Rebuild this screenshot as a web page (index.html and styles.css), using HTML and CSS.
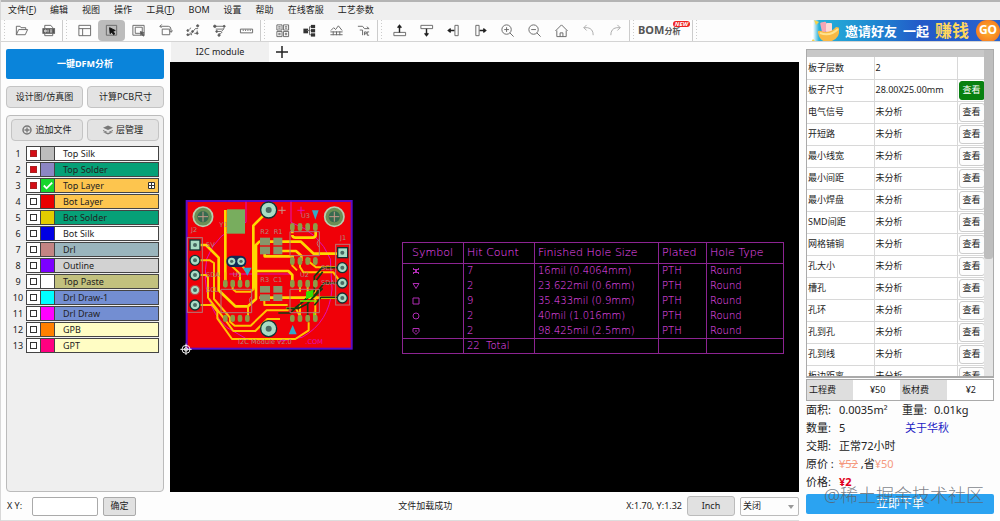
FILE: index.html
```html
<!DOCTYPE html>
<html lang="zh-CN">
<head>
<meta charset="utf-8">
<title>DFM 分析</title>
<link rel="stylesheet" href="styles.css">
</head>
<body>
<div class="app">
  <nav class="menubar">
    <button>文件(<u>F</u>)</button><button>编辑</button><button>视图</button><button>操作</button><button>工具(<u>T</u>)</button><button>BOM</button><button>设置</button><button>帮助</button><button>在线客服</button><button>工艺参数</button>
  </nav>

  <header class="toolbar">
    <div class="tools">
      <button class="tool" aria-label="打开"><svg viewBox="0 0 16 16"><path d="M2.5 12.500V3.500h4l1 1.500h5v2M2.500 12.500l2.500-5.500h9.500l-2.500 5.500z"/></svg></button>
      <button class="tool" aria-label="导入"><svg viewBox="0 0 16 16"><path d="M4 6V2.500h6.500L12.500 5v1M4 11v2.500h8.500V11"/><rect class="solid" x="2" y="6" width="12.500" height="5"/><path class="light" d="M4 7.500v2h1.500v-2zM7.500 7v3M9.500 7.500h2.500M9.500 9.500h2.500"/></svg></button>
    </div>
    <div class="tools">
      <button class="tool" aria-label="布局"><svg viewBox="0 0 16 16"><path d="M2 2.500h12.500v11H2zM2 6h12.500M6 6v7.500"/></svg></button>
      <button class="tool active" aria-label="选择"><svg viewBox="0 0 16 16"><path d="M2.500 2.500h11v10.500h-11z"/><path class="black" d="M6 5l6 3-2.500 .8 2 2.700-1.200 1-2-2.700-1.800 1.500z"/></svg></button>
      <button class="tool" aria-label="框选"><svg viewBox="0 0 16 16"><path d="M2 2.500h12v10.500H2zM4.500 4.500h7.500v6.500H4.500z"/><path class="solid" d="M10 9l4 1.500-1.500 .8 1.500 2-1 .7-1.500-2-1 1z"/></svg></button>
      <button class="tool" aria-label="旋转"><svg viewBox="0 0 16 16"><path d="M4.500 6.500h8v6h-8zM2 3.500h9q3 0 3 4v2M4 1.500L2 3.500l2 2M12 8l2 2 1.500-2"/></svg></button>
      <button class="tool" aria-label="网络"><svg viewBox="0 0 16 16"><path d="M2 12.500h3.500V10M7 13v-2l4-5h3M10 11h3V8M5 7l1-2"/><g class="solid"><circle cx="3" cy="12.500" r="1"/><circle cx="13.500" cy="3" r="1.200"/><circle cx="8" cy="9" r="1"/><circle cx="13" cy="11" r="1"/><circle cx="3" cy="8" r="1"/></g></svg></button>
      <button class="tool" aria-label="走线"><svg viewBox="0 0 16 16"><path d="M2 3.500h12M4 6.500h7l2-1.500M5 9h5l3-3M7 11.500h2l2-2M7 14v-1"/><g class="solid"><circle cx="3" cy="3.500" r="1.300"/><circle cx="5" cy="9" r="1"/><circle cx="7.500" cy="13" r="1.200"/><circle cx="13" cy="3.500" r="1"/></g></svg></button>
      <button class="tool" aria-label="测量"><svg viewBox="0 0 16 16"><path d="M1.500 6.500h13v4h-13zM4.500 7v1.500M7 7v1.500M9.500 7v1.500M12 7v1.500"/></svg></button>
    </div>
    <div class="tools">
      <button class="tool" aria-label="拼板"><svg viewBox="0 0 16 16"><path d="M2 2h5.500v5.500H2zM9 2h5.500v5.500H9zM2 9h5.500v5.500H2zM9 9h5.500v5.500H9zM3.500 4h2.500M3.500 5.500h2.500M10.500 4h2.500M10.500 5.500h2.500M3.500 11h2.500M3.500 12.500h2.500M10.500 11h2.500M10.500 12.500h2.500"/></svg></button>
      <button class="tool" aria-label="结构"><svg viewBox="0 0 16 16"><g class="fill"><rect x="1.500" y="6" width="5" height="5"/><rect x="9.500" y="2" width="4.500" height="3.500"/><rect x="9.500" y="6.500" width="4.500" height="3.500"/><rect x="9.500" y="11" width="4.500" height="3.500"/></g><path d="M5 8h4M8 4v8.500h1.500M8 4h1.500"/></svg></button>
      <button class="tool" aria-label="阻抗"><svg viewBox="0 0 16 16"><path d="M2 8l3-3 2 2 3-4 4 5"/><path d="M1.500 9.500h13M1.500 12.500h13M4.500 9v4M8 9v4M11.500 9v4"/></svg></button>
      <button class="tool" aria-label="IPC"><svg viewBox="0 0 16 16"><path d="M2 3.500h5l2 2.500h5M11.500 4l2.500 2M4 7.500h3v5.500M9 13V9.500h2v2H9M14 9.500h-2V13h2"/></svg></button>
    </div>
    <div class="tools">
      <button class="tool" aria-label="上移"><svg viewBox="0 0 16 16"><path d="M2 10h12.500v3.500H2z"/><path class="arrow" d="M8 10V3M6 5l2-2.500L10 5"/></svg></button>
      <button class="tool" aria-label="下移"><svg viewBox="0 0 16 16"><path d="M2 2.500h12.500V6H2z"/><path class="arrow" d="M8 6v7M6 11l2 2.500 2-2.500"/></svg></button>
      <button class="tool" aria-label="左移"><svg viewBox="0 0 16 16"><path d="M9.500 2.500h3.500v11H9.500z"/><path class="arrow" d="M9 8H3M5 6L2.500 8 5 10"/></svg></button>
      <button class="tool" aria-label="右移"><svg viewBox="0 0 16 16"><path d="M3 2.500h3.500v11H3z"/><path class="arrow" d="M7 8h6M11 6l2.500 2L11 10"/></svg></button>
      <button class="tool" aria-label="放大"><svg viewBox="0 0 16 16"><circle cx="7" cy="7" r="5"/><path d="M10.500 10.500L14.500 14.500M4.500 7h5M7 4.500v5"/></svg></button>
      <button class="tool" aria-label="缩小"><svg viewBox="0 0 16 16"><circle cx="7" cy="7" r="5"/><path d="M10.500 10.500L14.500 14.500M4.500 7h5"/></svg></button>
      <button class="tool" aria-label="主页"><svg viewBox="0 0 16 16"><path d="M1.500 8.500L8 2l6.500 6.500M3 8v6.500h10V8M6.500 14.500v-4h3v4"/></svg></button>
      <button class="tool faded" aria-label="撤销"><svg viewBox="0 0 16 16"><path d="M6 2L3 5l3 3M3 5h4q6 1 6 8"/></svg></button>
      <button class="tool faded" aria-label="重做"><svg viewBox="0 0 16 16"><path d="M10 2l3 3-3 3M13 5H9q-6 1-6 8"/></svg></button>
    </div>
    <div class="tools bom-tools"><button class="bom">BOM<small>分析</small><span class="new">NEW</span></button></div>
    <div class="tools tail"></div>
    <a class="banner" href="#">
      <svg class="cup" viewBox="0 0 28 22"><path d="M3 0l5 2-3 3zM0 22l2-3 3 3z" fill="#f6d34b"/><rect x="10" y="2" width="6" height="10" rx="1" fill="#f7a6b5" transform="rotate(-12 13 7)"/><rect x="15" y="3" width="6" height="9" rx="1" fill="#ffd9d5"/><path d="M7 13q-1-3 3-2 9 3 15-4 4 0 4 3l-2 6q-3 5-10 6-8 0-10-9z" fill="#f9b944"/><path d="M9 13q10 4 18-4" fill="none" stroke="#ffe38d" stroke-width="2"/></svg>
      <b>邀请好友</b><b>一起</b><b class="earn">赚钱</b><span class="go">GO</span>
    </a>
  </header>

  <aside class="side">
    <button class="primary">一键DFM分析</button>
    <div class="pair"><button class="btn">设计图/仿真图</button><button class="btn">计算PCB尺寸</button></div>
    <section class="layers">
      <div class="pair">
        <button class="btn"><svg viewBox="0 0 10 10"><circle cx="5" cy="5" r="4" fill="none" stroke="#777" stroke-width="1.500"/><path d="M5 2.500v5M2.500 5h5" stroke="#777" stroke-width="1.300"/></svg>追加文件</button>
        <button class="btn"><svg viewBox="0 0 10 10"><path d="M5 .5l5 2.300-5 2.300L0 2.800zM0 5l5 2.300L10 5v1L5 8.300 0 6zM0 7.300l5 2.200 5-2.200" fill="#777"/></svg>层管理</button>
      </div>
      <ol>
        <li><span class="num">1</span><label class="layer silk"><input type="checkbox" checked><i class="c1"></i><span>Top Silk</span></label></li>
        <li><span class="num">2</span><label class="layer solder"><input type="checkbox" checked><i class="c2"></i><span>Top Solder</span></label></li>
        <li><span class="num">3</span><label class="layer copper"><input type="checkbox" checked><i class="c3"><svg viewBox="0 0 14 14"><path d="M3 7l3 3 6-6" fill="none" stroke="#fff" stroke-width="2"/></svg></i><span>Top Layer</span><svg class="grid-icon" viewBox="0 0 7 7"><path d="M.5.5h6v6h-6zM3.500.5v6M.5 3.500h6" fill="#fff" stroke="#333"/></svg></label></li>
        <li><span class="num">4</span><label class="layer copper"><input type="checkbox"><i class="c4"></i><span>Bot Layer</span></label></li>
        <li><span class="num">5</span><label class="layer solder"><input type="checkbox"><i class="c5"></i><span>Bot Solder</span></label></li>
        <li><span class="num">6</span><label class="layer silk"><input type="checkbox"><i class="c6"></i><span>Bot Silk</span></label></li>
        <li><span class="num">7</span><label class="layer drl"><input type="checkbox"><i class="c7"></i><span>Drl</span></label></li>
        <li><span class="num">8</span><label class="layer outline"><input type="checkbox"><i class="c8"></i><span>Outline</span></label></li>
        <li><span class="num">9</span><label class="layer paste"><input type="checkbox"><i class="c9"></i><span>Top Paste</span></label></li>
        <li><span class="num">10</span><label class="layer draw"><input type="checkbox"><i class="c10"></i><span>Drl Draw-1</span></label></li>
        <li><span class="num">11</span><label class="layer draw"><input type="checkbox"><i class="c11"></i><span>Drl Draw</span></label></li>
        <li><span class="num">12</span><label class="layer gp"><input type="checkbox"><i class="c12"></i><span>GPB</span></label></li>
        <li><span class="num">13</span><label class="layer gp"><input type="checkbox"><i class="c13"></i><span>GPT</span></label></li>
      </ol>
    </section>
  </aside>

  <main class="work">
    <div class="tabs"><button class="tab">I2C module</button><button class="add" aria-label="新建"><svg viewBox="0 0 12 12"><path d="M6 0v12M0 6h12" stroke="#222" stroke-width="1.500"/></svg></button></div>
    <div class="canvas">
      <svg class="board" viewBox="0 0 552 492">
        <rect x="32" y="18" width="495" height="443" fill="#f00008" stroke="#5a0cc8" stroke-width="6"/>
        <g fill="none" stroke="#e010b8" stroke-width="3">
          <path d="M210 20v62q-90 30-118 110M345 20v62q85 30 118 110l5 90q-8 100-90 145l-70 12M92 192q-20 130 60 205l60 35M160 237h185M375 35v22M364 46h22"/>
        </g>
        <g fill="none" stroke="#ffd800" stroke-width="8" stroke-linejoin="round">
          <path d="M148 45v210M278 46l-46 46v190M72 150h18l38 38v98l50 48h38l24-22V150l10-10h125l38 36h74M242 228h95l12 12v20M349 115v-15M349 120q0 8 10 8h50q10 0 10-8v-12M266 170v14h84v14M300 168h60l16 14v16M250 308h180M380 308h105"/>
        </g>
        <g fill="none" stroke="#ffc400" stroke-width="6" stroke-linejoin="round">
          <path d="M72 196h30l12 8v108l48 56v12l14 12h48l48-46h66M72 240h18l6 8v60l60 78 16 22h66l36-36h38M72 330h36l16 20v20l44 62h190l40-26v-24M170 260v22l10 8h44l12-10M148 262v-30M168 200v14l24 22v20M192 205l20 24M216 330v40M372 290v-30M395 290v-30M418 375v-90M372 200v16l10 16h90l16 22M349 200v12l14 14M480 216l-60 1-20-16v-12M372 375v-50M330 340h30l12 25M265 312v18h70"/>
        </g>
        <g fill="none" stroke="#123c10" stroke-width="5"><path d="M485 218h-46l-24 26v44l-72 66h-36M485 264h-40l-50 62-28 14h-36M440 230l-22 30M400 305l-50 40M440 280l-45 44v36M485 307h-50l-20 24"/></g>
        <path d="M390 290l22-6v20l-22 8z" fill="#32e000"/>
        <path d="M414 350v25M372 318h50" stroke="#76ef00" stroke-width="5"/>
        <g fill="none" stroke="#b57878" stroke-width="3"><rect x="34" y="128" width="45" height="224"/><rect x="479" y="148" width="42" height="182"/><path d="M135 283h92v70h-92v-70M227 304q-13 12 0 24M342 110h88v72h-88zM430 133q-13 12 0 24M342 283h88v70h-88z"/></g>
        <g fill="#78ad5e"><rect x="153" y="43" width="54" height="73"/>
          <g fill="#8c9c48"><rect x="141" y="254" width="14" height="24" rx="7"/><rect x="163" y="254" width="14" height="24" rx="7"/><rect x="185" y="254" width="14" height="24" rx="7"/><rect x="207" y="254" width="14" height="24" rx="7"/><rect x="141" y="359" width="14" height="22" rx="7"/><rect x="163" y="359" width="14" height="22" rx="7"/><rect x="185" y="359" width="14" height="22" rx="7"/><rect x="207" y="359" width="14" height="22" rx="7"/><rect x="342" y="84" width="14" height="24" rx="7"/><rect x="365" y="84" width="14" height="24" rx="7"/><rect x="388" y="84" width="14" height="24" rx="7"/><rect x="411" y="84" width="14" height="24" rx="7"/><rect x="342" y="186" width="14" height="24" rx="7"/><rect x="365" y="186" width="14" height="24" rx="7"/><rect x="388" y="186" width="14" height="24" rx="7"/><rect x="411" y="186" width="14" height="24" rx="7"/><rect x="342" y="254" width="14" height="24" rx="7"/><rect x="365" y="254" width="14" height="24" rx="7"/><rect x="388" y="254" width="14" height="24" rx="7"/><rect x="411" y="254" width="14" height="24" rx="7"/><rect x="342" y="359" width="14" height="22" rx="7"/><rect x="365" y="359" width="14" height="22" rx="7"/><rect x="388" y="359" width="14" height="22" rx="7"/><rect x="411" y="359" width="14" height="22" rx="7"/></g>
          <g fill="#87966b"><rect x="252" y="128" width="30" height="23"/><rect x="292" y="128" width="27" height="23"/><rect x="252" y="155" width="30" height="23"/><rect x="292" y="155" width="27" height="23"/><rect x="252" y="273" width="30" height="20"/><rect x="292" y="273" width="27" height="20"/><rect x="252" y="298" width="30" height="20"/><rect x="292" y="298" width="27" height="20"/></g>
        </g>
        <g fill="#34a9c8"><path d="M408 46h20l-10 28zM201 218h26l-13 24zM338 418l12-28 12 28z"/></g>
        <g fill="#a9dcc4" stroke="#133" stroke-width="4"><circle cx="278" cy="45" r="24"/><circle cx="278" cy="401" r="24"/><rect x="42" y="135" width="30" height="30"/><circle cx="57" cy="196" r="15"/><circle cx="57" cy="240" r="15"/><circle cx="57" cy="285" r="14" stroke="#b44"/><circle cx="57" cy="330" r="15"/><rect x="485" y="158" width="30" height="30"/><circle cx="499" cy="218" r="15"/><circle cx="499" cy="264" r="15"/><circle cx="499" cy="309" r="15"/></g>
        <rect x="151" y="182" width="60" height="34" rx="16" fill="#102a55"/>
        <g fill="#a9dcc4"><circle cx="167" cy="199" r="11"/><circle cx="195" cy="199" r="11"/></g>
        <g fill="#6c8e55" stroke="#b7cfb0" stroke-width="5"><circle cx="81" cy="65" r="29"/><circle cx="475" cy="65" r="29"/></g>
        <g fill="#376a4f"><circle cx="81" cy="65" r="17"/><circle cx="475" cy="65" r="17"/></g>
        <g fill="#496b64"><circle cx="278" cy="45" r="9"/><circle cx="278" cy="401" r="9"/><circle cx="57" cy="150" r="6"/><circle cx="57" cy="196" r="6"/><circle cx="57" cy="240" r="6"/><circle cx="57" cy="285" r="6"/><circle cx="57" cy="330" r="6"/><circle cx="167" cy="199" r="5"/><circle cx="195" cy="199" r="5"/><circle cx="499" cy="173" r="6"/><circle cx="499" cy="218" r="6"/><circle cx="499" cy="264" r="6"/><circle cx="499" cy="309" r="6"/></g>
        <path d="M66 65h30M81 50v30M460 65h30M475 50v30M318 35v22M307 46h22" stroke="#c79a8a" stroke-width="3"/>
        <g class="silk-text"><text x="45" y="112">J2</text><text x="492" y="136">J1</text><text x="130" y="96">Y1</text><text x="253" y="118">R2</text><text x="293" y="118">R1</text><text x="375" y="70">U3</text><text x="170" y="246">U1</text><text x="372" y="246">U2</text><text x="253" y="262">R3</text><text x="292" y="262">C1</text><text x="90" y="157">5V</text><text x="90" y="247">SDA</text><text x="90" y="292">SCL</text><text x="435" y="224">SCL</text><text x="435" y="270">SDA</text><text x="186" y="446">I2C Module v2.0</text></g>
        <text class="pink-text" x="388" y="446">.COM</text>
        <g fill="none" stroke="#eee" stroke-width="3"><circle cx="30" cy="463" r="12"/><circle cx="30" cy="463" r="5"/><path d="M13 463h34M30 446v34"/></g>
      </svg>

      <table class="drill">
        <thead><tr><th class="sym">Symbol</th><th class="hit">Hit Count</th><th class="size">Finished Hole Size</th><th class="plated">Plated</th><th class="type">Hole Type</th></tr></thead>
        <tbody>
          <tr><td><svg viewBox="0 0 8 8"><path d="M1 1l6 6M7 1L1 7M1 2.500h6M1 5.500h6" /></svg></td><td>7</td><td>16mil (0.4064mm)</td><td>PTH</td><td>Round</td></tr>
          <tr><td><svg viewBox="0 0 8 8"><path d="M1 1.500h6L4 6.500z"/></svg></td><td>2</td><td>23.622mil (0.6mm)</td><td>PTH</td><td>Round</td></tr>
          <tr><td><svg viewBox="0 0 8 8"><path d="M1 1h6v6H1z"/></svg></td><td>9</td><td>35.433mil (0.9mm)</td><td>PTH</td><td>Round</td></tr>
          <tr><td><svg viewBox="0 0 8 8"><circle cx="4" cy="4" r="3"/></svg></td><td>2</td><td>40mil (1.016mm)</td><td>PTH</td><td>Round</td></tr>
          <tr><td><svg viewBox="0 0 8 8"><path d="M1 1.500h6v3l-3 3-3-3zM3 4h2"/></svg></td><td>2</td><td>98.425mil (2.5mm)</td><td>PTH</td><td>Round</td></tr>
        </tbody>
        <tfoot><tr><td></td><td>22&nbsp; Total</td><td></td><td></td><td></td></tr></tfoot>
      </table>
    </div>
  </main>

  <section class="report">
    <div class="scroll">
      <div class="rows">
        <div class="strip"></div>
        <table class="checks">
          <tr><th>板子层数</th><td>2</td><td></td></tr>
          <tr><th>板子尺寸</th><td>28.00X25.00mm</td><td><button class="ok">查看</button></td></tr>
          <tr><th>电气信号</th><td>未分析</td><td><button>查看</button></td></tr>
          <tr><th>开短路</th><td>未分析</td><td><button>查看</button></td></tr>
          <tr><th>最小线宽</th><td>未分析</td><td><button>查看</button></td></tr>
          <tr><th>最小间距</th><td>未分析</td><td><button>查看</button></td></tr>
          <tr><th>最小焊盘</th><td>未分析</td><td><button>查看</button></td></tr>
          <tr><th>SMD间距</th><td>未分析</td><td><button>查看</button></td></tr>
          <tr><th>网格铺铜</th><td>未分析</td><td><button>查看</button></td></tr>
          <tr><th>孔大小</th><td>未分析</td><td><button>查看</button></td></tr>
          <tr><th>槽孔</th><td>未分析</td><td><button>查看</button></td></tr>
          <tr><th>孔环</th><td>未分析</td><td><button>查看</button></td></tr>
          <tr><th>孔到孔</th><td>未分析</td><td><button>查看</button></td></tr>
          <tr><th>孔到线</th><td>未分析</td><td><button>查看</button></td></tr>
          <tr><th>板边距离</th><td>未分析</td><td><button>查看</button></td></tr>
        </table>
      </div>
      <div class="track"><div class="thumb"></div></div>
    </div>
    <table class="fees"><tr><th>工程费</th><td>¥50</td><th>板材费</th><td>¥2</td></tr></table>
    <div class="quote">
      <span>面积:</span><span>0.0035m²</span><span>重量:</span><span>0.01kg</span>
      <span>数量:</span><span>5</span><a href="#">关于华秋</a>
      <span>交期:</span><span class="wide">正常72小时</span>
      <span>原价 :</span><span class="wide"><s>¥52</s> ,省<em>¥50</em></span>
      <span>价格:</span><strong class="wide">¥2</strong>
    </div>
    <div class="order"><button>立即下单</button><span class="mark">@稀土掘金技术社区</span></div>
  </section>

  <footer class="status">
    <label for="xy">X Y:</label><input id="xy" type="text"><button class="sure">确定</button>
    <span class="message">文件加载成功</span>
    <span>X:1.70, Y:1.32</span><button class="unit">Inch</button>
    <span class="pick"><select aria-label="捕捉"><option>关闭</option></select></span>
  </footer>
</div>
</body>
</html>
```
FILE: styles.css
```css
*, *::before { box-sizing: border-box; }
body { margin: 0; font: 9px/12px "Noto Sans", "Noto Sans CJK SC", sans-serif; color: #222; background: #fdfdfd; }
button, input, select { font: inherit; color: inherit; margin: 0; padding: 0; border: 0; background: none; }
table { border-collapse: collapse; }
th { font-weight: 400; text-align: left; }

.app {
  display: grid;
  grid-template: 20px 22px minmax(0, 1fr) 29px / 169px minmax(0, 1fr) 201px;
  height: 100vh;
  border-left: 1px solid #d8d8d8;
}
.menubar { grid-column: 1 / -1; display: flex; gap: 14px; padding-left: 7px; background: #efefef; border-top: 2px solid #b4b4b4; }
.menubar button { padding-bottom: 2px; }

/* toolbar */
.toolbar { grid-column: 1 / -1; display: flex; border-bottom: 1px solid #d4d4d4; }
.tools { display: flex; padding-left: 7px; border-right: 1px solid #ccc; background: radial-gradient(circle, #ccc 1px, transparent 1px) 2px 2px / 3px 3px repeat-y; }
.tools + .tools { padding-left: 8px; }
.tool { width: 27px; display: grid; place-items: center; border-radius: 4px; }
.tool svg { width: 15px; height: 15px; fill: none; stroke: #666; stroke-width: 1; }
.tool.active { background: #bcbcbc; }
.tool .solid { fill: #555; }
.tool .black { fill: #111; stroke: #111; }
.tool .fill { fill: #333; stroke: none; }
.tool .light { stroke: #eee; }
.tool .arrow { stroke: #222; stroke-width: 1.500; }
.tool.faded svg { stroke: #aaa; }
.bom { position: relative; width: 54px; text-align: left; font-size: 11px; font-weight: 700; color: #555; }
.bom small { font-size: 8px; }
.new { position: absolute; top: 1px; right: 2px; padding: 0 2px; border-radius: 3px; background: #e22; color: #fff; font-size: 6px; line-height: 6px; font-style: italic; }
.tools.tail { border: 0; }
.banner { display: flex; align-items: center; gap: 3px; width: 189px; margin-left: auto; overflow: hidden; text-decoration: none; color: #fff; font-size: 13px; line-height: 20px; background: linear-gradient(90deg, #fff 2px, #27b0d8 8px, #1e8bd2 60px, #2359c8 110px, #2863ce); }
.banner b { white-space: nowrap; margin-right: 3px; }
.banner .cup { flex: none; width: 28px; height: 22px; margin-right: 3px; }
.banner .earn { font-size: 17px; color: #ffd75c; }
.go { flex: none; width: 24px; height: 22px; border-radius: 12px; background: radial-gradient(#ffb52e, #f26a1c); font-weight: 700; font-size: 12px; text-align: center; margin-left: auto; }

/* layer panel */
.side { grid-row: 3; display: flex; flex-direction: column; gap: 7px; padding: 7px 6px 0 5px; }
.primary { height: 30px; border-radius: 2px; background: #0a84da; color: #fff; font-weight: 700; }
.pair { display: grid; grid-template-columns: 1fr 1fr; gap: 4px; }
.btn { display: flex; align-items: center; justify-content: center; gap: 3px; height: 22px; border: 1px solid #c4c4c4; border-radius: 4px; background: #e3e3e3; white-space: nowrap; }
.btn svg { width: 10px; height: 10px; }
.layers { flex: 1; padding: 3px 4px; border: 1px solid #bbb; border-radius: 4px; background: #efefef; }
.layers ol { list-style: none; margin: 5px 0 0; padding: 0; display: grid; gap: 1px; }
.layers li { display: flex; align-items: center; height: 15px; }
.num { width: 15px; padding-right: 1px; text-align: center; }
.layer { flex: 1; display: flex; align-items: center; height: 15px; border: 1px solid #444; }
.layer input { appearance: none; width: 13px; height: 13px; background: #fff; display: grid; place-items: center; }
.layer input::before { content: ""; width: 7px; height: 7px; border: 1px solid #333; }
.layer input:checked::before { background: #d40d16; border-color: #a22; }
.layer i { width: 15px; height: 13px; border: solid #444; border-width: 0 1px; }
.layer i svg { display: block; width: 13px; height: 13px; }
.layer span { padding-left: 8px; flex: 1; }
.grid-icon { width: 7px; height: 7px; margin-right: 3px; }
.silk { background: #fff; } .solder { background: #06a077; } .copper { background: #fdc54e; }
.drl { background: #9ab5bd; } .outline { background: #d2d2d2; } .paste { background: #c2c17e; }
.draw { background: #738ed2; } .gp { background: #fffdc4; }
.c1 { background: #bdbdbd; } .c2 { background: #8c86c4; } .c3 { background: #18d62c; } .c4 { background: #ea0000; }
.c5 { background: #e3cc00; } .c6 { background: #0000e4; } .c7 { background: #c38483; } .c8 { background: #7c00ff; }
.c9 { background: #fff; } .c10 { background: #0ff; } .c11 { background: #f0f; } .c12 { background: #ff8000; } .c13 { background: #ff0080; }

/* drawing area */
.work { grid-row: 3; display: flex; flex-direction: column; min-height: 0; }
.tabs { display: flex; gap: 6px; height: 20px; padding-left: 1px; }
.tab { width: 98px; background: #f0f0f0; }
.add { width: 13px; display: grid; place-items: center; }
.add svg { width: 12px; height: 12px; }
.canvas { position: relative; flex: 1; overflow: hidden; background: #000; }
.board { position: absolute; left: 6px; top: 133px; width: 184px; height: 164px; }
.silk-text, .pink-text { font: 20px "DejaVu Sans", sans-serif; fill: #b08a80; }
.pink-text { fill: #e010b8; }
.drill { position: absolute; left: 232px; top: 180px; table-layout: fixed; width: 382px; font: 200 10px/14px "DejaVu Sans", sans-serif; color: #f850ff; }
.drill th, .drill td { height: 15px; padding: 0 0 0 3px; border: solid #8c2492; border-width: 0 1px; white-space: nowrap; }
.drill th { height: 21px; border-width: 1px; font-weight: 200; font-size: 11px; }
.drill tfoot td { border-width: 1px; }
.drill th:first-child, .drill td:first-child { padding-left: 9px; }
.drill svg { display: block; width: 8px; height: 8px; fill: none; stroke: #b02cb4; }
.sym { width: 61px; } .hit { width: 71px; } .size { width: 124px; } .plated { width: 48px; } .type { width: 77px; }

/* report */
.report { grid-area: 3 / 3 / 5 / 4; display: flex; flex-direction: column; padding: 7px 6px 7px 7px; min-height: 0; }
.scroll { flex: 1; min-height: 0; display: flex; border: 1px solid #aaa; border-bottom-width: 2px; }
.rows { flex: 1; min-width: 0; overflow: hidden; background: #fff; }
.strip { height: 7px; background: #c8c8c8; }
.checks { width: 100%; table-layout: fixed; }
.checks th, .checks td { height: 22px; padding: 0 0 0 1px; border: solid #d8d8d8; border-width: 0 1px 1px 0; }
.checks th { width: 67px; padding-left: 1px; }
.checks td:last-child { width: 27px; padding: 0 0 0 1px; border-right: 0; }
.checks button { display: block; width: 26px; height: 19px; border: 1px solid #ccc; border-radius: 3px; background: #fdfdfd; }
.checks .ok { background: #078010; border-color: #078010; color: #fff; }
.track { width: 9px; background: #e4e4e4; }
.thumb { height: 64%; background: #bdbdbd; border-radius: 0 0 3px 3px; }
.fees { width: 100%; margin-top: 1px; table-layout: fixed; border: 1px solid #aaa; background: #fff; }
.fees th, .fees td { height: 21px; padding: 0 0 0 2px; }
.fees th { background: #dedede; }
.fees td { text-align: center; }
.quote { display: grid; grid-template-columns: 33px 63px 32px 1fr; font-size: 11px; line-height: 18px; white-space: nowrap; }
.quote .wide { grid-column: span 3; }
.quote a { grid-column: span 2; padding-left: 3px; color: #1b1bc4; text-decoration: none; }
.quote s, .quote em { color: #f59a80; font-style: normal; }
.quote strong { color: #e00020; }
.order { position: relative; margin-top: 3px; }
.order button { display: block; width: 100%; height: 20px; border-radius: 2px; background: #2ba3f1; color: #fff; font-size: 12px; line-height: 20px; }
.mark { position: absolute; right: 10px; top: -11px; font-size: 18px; line-height: 24px; font-weight: 300; white-space: nowrap; color: rgba(90, 96, 104, .8); }

/* status bar */
.status { grid-area: 4 / 1 / 5 / 3; display: flex; align-items: center; gap: 5px; padding: 0 0 0 6px; border-bottom: 1px solid #ddd; white-space: nowrap; }
.status input { width: 66px; height: 19px; margin-left: 5px; border: 1px solid #aaa; border-radius: 2px; background: #fff; }
.sure { width: 33px; height: 19px; border: 1px solid #aaa; border-radius: 2px; background: #e1e1e1; }
.message { flex: 1; margin-left: 88px; text-align: center; }
.unit { width: 48px; height: 20px; border: 1px solid #bbb; border-radius: 3px; background: #e1e1e1; }
.pick { position: relative; width: 59px; }
.pick::after { content: ""; position: absolute; right: 5px; top: 8px; border: 3px solid transparent; border-top: 4px solid #999; }
.status select { appearance: none; width: 100%; height: 19px; padding-left: 2px; border: 1px solid #bbb; border-radius: 2px; background: #fdfdfd; }
```
